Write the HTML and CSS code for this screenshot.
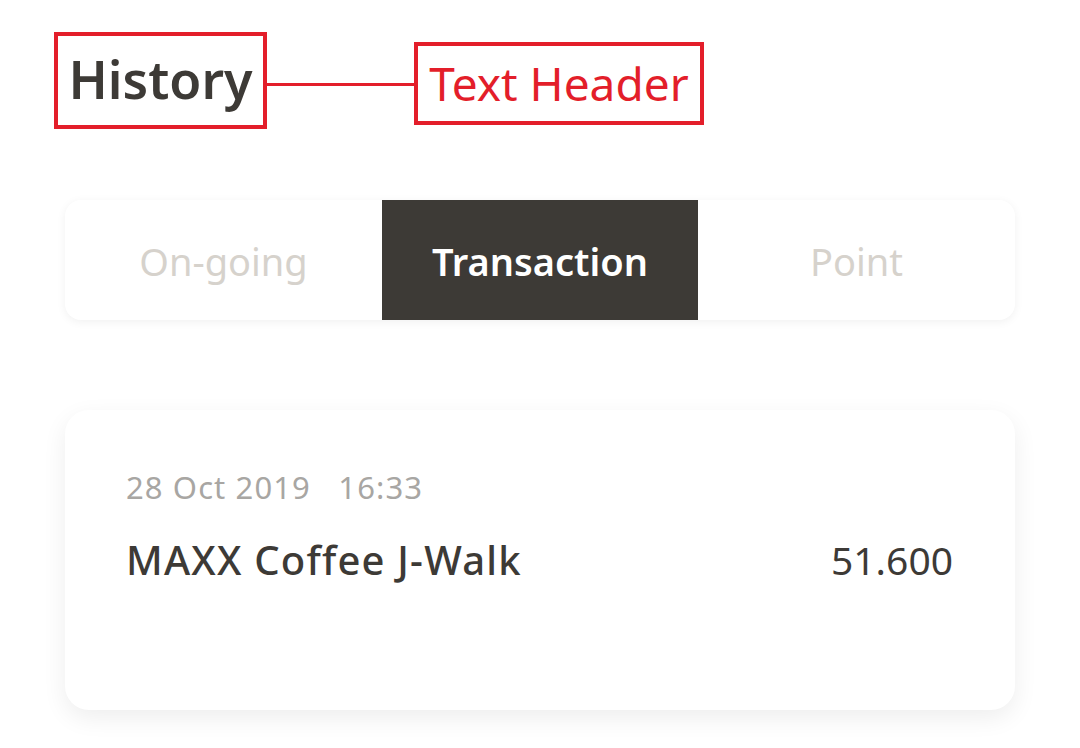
FILE: index.html
```html
<!DOCTYPE html>
<html>
<head>
<meta charset="utf-8">
<link rel="stylesheet" href="styles.css">
</head>
<body>
<div class="page">
  <div class="header">
    <div class="box history-box"><h1 class="title">History</h1></div>
    <div class="connector"></div>
    <div class="box label-box"><span class="label">Text Header</span></div>
  </div>
  <div class="tabs">
    <div class="tab">On-going</div>
    <div class="tab active">Transaction</div>
    <div class="tab">Point</div>
  </div>
  <div class="card">
    <div class="date">28 Oct 2019&nbsp;&nbsp;&nbsp;16:33</div>
    <div class="row">
      <span class="merchant">MAXX Coffee J-Walk</span>
      <span class="amount">51.600</span>
    </div>
  </div>
</div>
</body>
</html>
```

FILE: styles.css
```css
* { box-sizing: border-box; }
html, body { margin: 0; padding: 0; background: #ffffff; }
body { font-family: "Noto Sans", "Open Sans", sans-serif; color: #3d3a36; width: 1080px; height: 748px; overflow: hidden; }
.page { padding: 32px 0 0 54px; }
.header { display: flex; align-items: flex-start; }
.box { border: 4px solid #e31e2a; display: flex; align-items: center; justify-content: center; }
.history-box { width: 213px; height: 97px; }
.title { margin: 0; font-size: 52px; font-weight: 600; color: #3d3a36; line-height: 1; padding-bottom: 4px; }
.connector { width: 147px; height: 3px; background: #e31e2a; margin-top: 51px; }
.label-box { width: 290px; height: 83px; margin-top: 10px; }
.label { font-size: 46px; color: #e31e2a; line-height: 1; padding-bottom: 2px; }
.tabs { margin: 71px 0 0 11px; width: 950px; height: 120px; display: grid; grid-template-columns: 317px 316px 317px; background: #fff; border-radius: 16px; box-shadow: 0 2px 10px rgba(0,0,0,0.06); overflow: hidden; }
.tab { display: flex; align-items: center; justify-content: center; font-size: 38px; color: #d6d2cc; padding-top: 2px; }
.tab.active { background: #3d3a36; color: #ffffff; font-weight: 600; }
.card { margin: 90px 0 0 11px; width: 950px; height: 300px; background: #fff; border-radius: 24px; box-shadow: 0 8px 24px rgba(0,0,0,0.07); padding: 56px 62px 0 61px; }
.date { font-size: 31px; color: #a8a6a3; letter-spacing: 1.1px; }
.row { display: flex; justify-content: space-between; align-items: baseline; margin-top: 24px; }
.merchant { font-size: 40px; font-weight: 500; color: #3d3a36; letter-spacing: 1.2px; }
.amount { font-size: 39px; color: #3d3a36; }
```
